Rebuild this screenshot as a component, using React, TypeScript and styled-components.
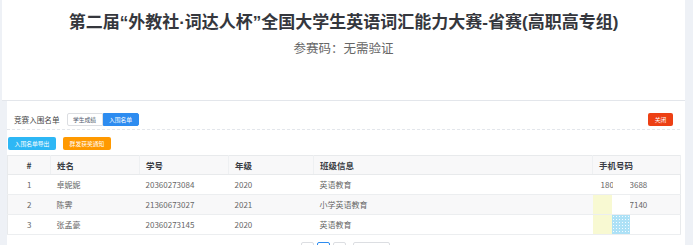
import React from 'react';
import styled, { createGlobalStyle } from 'styled-components';

const GlobalStyle = createGlobalStyle`
  * {
    box-sizing: border-box;
  }
  body {
    margin: 0;
    background: #eef1f6;
    font-family: "Noto Sans CJK SC", "Noto Sans", sans-serif;
  }
`;

const Page = styled.div`
  width: 693px;
  height: 245px;
  overflow: hidden;
`;

const Header = styled.header`
  margin-left: 2px;
  width: 683px;
  height: 101px;
  background: #fff;
  border-bottom: 1px solid #e3e6eb;
  display: flex;
  flex-direction: column;
  align-items: center;
  padding-top: 12px;
`;

const Title = styled.h1`
  margin: 0;
  font-family: "Liberation Sans", "Noto Sans CJK SC", sans-serif;
  font-size: 17px;
  line-height: 22px;
  font-weight: 700;
  color: #35373d;
  white-space: nowrap;
`;

const SubTitle = styled.div`
  margin-top: 6px;
  font-size: 12.5px;
  line-height: 16px;
  color: #666;
`;

const Content = styled.main`
  margin-left: 7px;
  width: 678px;
  height: 144px;
  background: #fff;
  padding-right: 5px;
`;

const Toolbar = styled.div`
  display: flex;
  align-items: center;
  padding: 12px 7px 3px 7px;
  border-bottom: 1px dashed #e3e6eb;
`;

const SectionTitle = styled.span`
  font-size: 7.6px;
  line-height: 13px;
  color: #444;
`;

const Segment = styled.div`
  display: flex;
  margin-left: 7px;
`;

const SegmentButton = styled.button<{ $active?: boolean }>`
  width: 36px;
  height: 13px;
  padding: 0;
  font-family: inherit;
  font-size: 5.8px;
  line-height: 11px;
  border: 1px solid ${p => (p.$active ? '#2d8cf0' : '#dcdee2')};
  background: ${p => (p.$active ? '#2d8cf0' : '#fff')};
  color: ${p => (p.$active ? '#fff' : '#515a6e')};
  border-radius: ${p => (p.$active ? '0 2px 2px 0' : '2px 0 0 2px')};
`;

const Spacer = styled.div`
  flex: 1;
`;

const Button = styled.button<{ $color: string; $width?: number }>`
  width: ${p => p.$width ?? 48}px;
  height: 13px;
  padding: 0;
  font-family: inherit;
  font-size: 5.8px;
  line-height: 13px;
  border: none;
  border-radius: 2px;
  background: ${p => p.$color};
  color: #fff;
`;

const Actions = styled.div`
  display: flex;
  gap: 7px;
  padding-left: 1px;
  margin-top: 7px;
`;

const Table = styled.table`
  margin-top: 5px;
  width: 673px;
  border-collapse: collapse;
  table-layout: fixed;
  border: 1px solid #e8eaec;
  font-size: 8px;
  color: #666;
`;

const Th = styled.th<{ $center?: boolean }>`
  height: 19px;
  padding: 0 0 0 ${p => (p.$center ? 0 : 6)}px;
  background: #f8f8f9;
  text-align: ${p => (p.$center ? 'center' : 'left')};
  font-weight: 700;
  font-size: 8.5px;
  color: #3a3d44;
  border-right: 1px solid #eef0f2;
  border-bottom: 1px solid #e8eaec;
`;

const Tr = styled.tr<{ $striped?: boolean }>`
  background: ${p => (p.$striped ? '#f8f8f9' : '#fff')};
`;

const Td = styled.td<{ $center?: boolean; $flush?: boolean }>`
  height: 20px;
  padding: 0 0 0 ${p => (p.$center || p.$flush ? 0 : 6)}px;
  text-align: ${p => (p.$center ? 'center' : 'left')};
  border-bottom: 1px solid #eceef0;
  white-space: nowrap;
  overflow: hidden;
`;

const PhoneCell = styled.div`
  display: flex;
  height: 19px;
  align-items: center;
`;

type MaskKind = 'text' | 'white' | 'yellow' | 'blue' | 'none';

const Mask = styled.span<{ $kind: MaskKind; $width: number }>`
  width: ${p => p.$width}px;
  height: 100%;
  flex: none;
  overflow: hidden;
  display: flex;
  align-items: center;
  padding-left: ${p => (p.$kind === 'text' ? 8 : 0)}px;
  background: ${p =>
    p.$kind === 'white'
      ? '#fff'
      : p.$kind === 'yellow'
      ? '#f8f9d2'
      : p.$kind === 'blue'
      ? 'radial-gradient(circle, #f4fbff 0.6px, transparent 0.9px) 0 0 / 3px 3px, #ade1f6'
      : 'transparent'};
`;

const Pager = styled.div`
  display: flex;
  justify-content: center;
  gap: 3px;
  margin-top: 7px;
  padding-left: 4px;
`;

const PageBox = styled.div<{ $active?: boolean; $width?: number }>`
  width: ${p => p.$width ?? 13}px;
  height: 13px;
  border: 1px solid ${p => (p.$active ? '#2d8cf0' : '#dcdee2')};
  border-radius: 2px;
  background: #fff;
  margin-left: ${p => (p.$width ? 4 : 0)}px;
`;

type Row = {
  name: string;
  sid: string;
  grade: string;
  cls: string;
  phone: { kind: MaskKind; width: number; text?: string }[];
};

const rows: Row[] = [
  {
    name: '卓妮妮',
    sid: '20360273084',
    grade: '2020',
    cls: '英语教育',
    phone: [
      { kind: 'text', width: 20, text: '180' },
      { kind: 'white', width: 17 },
      { kind: 'none', width: 30, text: '3688' },
    ],
  },
  {
    name: '陈霁',
    sid: '21360673027',
    grade: '2021',
    cls: '小学英语教育',
    phone: [
      { kind: 'yellow', width: 19 },
      { kind: 'white', width: 18 },
      { kind: 'none', width: 30, text: '7140' },
    ],
  },
  {
    name: '张孟豪',
    sid: '20360273145',
    grade: '2020',
    cls: '英语教育',
    phone: [
      { kind: 'yellow', width: 19 },
      { kind: 'blue', width: 18 },
    ],
  },
];

export default function App() {
  return (
    <Page>
      <GlobalStyle />
      <Header>
        <Title>第二届“外教社·词达人杯”全国大学生英语词汇能力大赛-省赛(高职高专组)</Title>
        <SubTitle>参赛码：无需验证</SubTitle>
      </Header>
      <Content>
        <Toolbar>
          <SectionTitle>竞赛入围名单</SectionTitle>
          <Segment>
            <SegmentButton>学生成绩</SegmentButton>
            <SegmentButton $active>入围名单</SegmentButton>
          </Segment>
          <Spacer />
          <Button $color="#ed4014" $width={25}>关闭</Button>
        </Toolbar>
        <Actions>
          <Button $color="#2db7f5">入围名单导出</Button>
          <Button $color="#ff9900">群发获奖通知</Button>
        </Actions>
        <Table>
          <colgroup>
            <col style={{ width: 43 }} />
            <col style={{ width: 89 }} />
            <col style={{ width: 89 }} />
            <col style={{ width: 85 }} />
            <col style={{ width: 279 }} />
            <col style={{ width: 88 }} />
          </colgroup>
          <thead>
            <tr>
              <Th $center>#</Th>
              <Th>姓名</Th>
              <Th>学号</Th>
              <Th>年级</Th>
              <Th>班级信息</Th>
              <Th>手机号码</Th>
            </tr>
          </thead>
          <tbody>
            {rows.map((r, i) => (
              <Tr key={r.sid} $striped={i % 2 === 1}>
                <Td $center>{i + 1}</Td>
                <Td>{r.name}</Td>
                <Td>{r.sid}</Td>
                <Td>{r.grade}</Td>
                <Td>{r.cls}</Td>
                <Td $flush>
                  <PhoneCell>
                    {r.phone.map((m, j) => (
                      <Mask key={j} $kind={m.kind} $width={m.width}>
                        {m.text}
                      </Mask>
                    ))}
                  </PhoneCell>
                </Td>
              </Tr>
            ))}
          </tbody>
        </Table>
        <Pager>
          <PageBox />
          <PageBox $active />
          <PageBox />
          <PageBox $width={37} />
        </Pager>
      </Content>
    </Page>
  );
}
